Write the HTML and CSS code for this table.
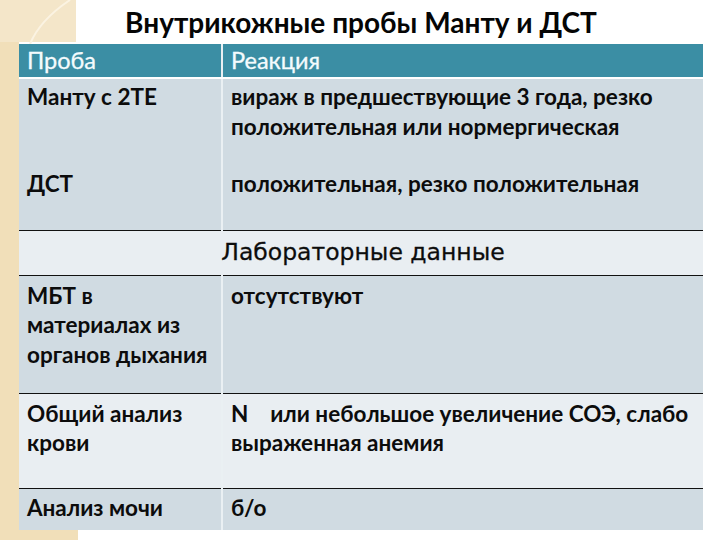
FILE: index.html
```html
<!DOCTYPE html>
<html lang="ru">
<head>
<meta charset="utf-8">
<link rel="stylesheet" href="styles.css">
</head>
<body>
<div class="deco">
  <svg width="720" height="540" viewBox="0 0 720 540">
    <rect x="0" y="0" width="19" height="540" fill="#f1dfb9"/>
    <rect x="0" y="0" width="76" height="42" fill="#f4e6c9"/>
    <path d="M70 0 Q40 20 30 44" stroke="#fbf3e2" stroke-width="2" fill="none"/>
    <rect x="0" y="528" width="78" height="12" fill="#f1dfb9"/>
  </svg>
</div>
<div class="slide">
  <h1 class="title">Внутрикожные пробы Манту и ДСТ</h1>
  <table class="grid">
    <tr class="head">
      <td class="c1">Проба</td>
      <td class="c2">Реакция</td>
    </tr>
    <tr class="r-dark r1">
      <td class="c1">Манту с 2ТЕ</td>
      <td class="c2">вираж в предшествующие 3 года, резко положительная или нормергическая</td>
    </tr>
    <tr class="r-dark r2">
      <td class="c1">ДСТ</td>
      <td class="c2">положительная, резко положительная</td>
    </tr>
    <tr class="r-light lab">
      <td colspan="2" class="labcell">Лабораторные данные</td>
    </tr>
    <tr class="r-dark r3">
      <td class="c1">МБТ в материалах из органов дыхания</td>
      <td class="c2">отсутствуют</td>
    </tr>
    <tr class="r-light r4">
      <td class="c1">Общий анализ крови</td>
      <td class="c2 wide">N&nbsp;&nbsp;&nbsp; или небольшое увеличение СОЭ, слабо выраженная анемия</td>
    </tr>
    <tr class="r-dark r5">
      <td class="c1">Анализ мочи</td>
      <td class="c2">б/о</td>
    </tr>
  </table>
</div>
</body>
</html>
```
FILE: styles.css
```css
html, body {
  margin: 0;
  padding: 0;
  background: #ffffff;
}
body {
  width: 720px;
  height: 540px;
  position: relative;
  overflow: hidden;
  font-family: "Lato", "Open Sans", sans-serif;
  color: #0c0c0c;
}
.deco {
  position: absolute;
  left: 0;
  top: 0;
  width: 720px;
  height: 540px;
  z-index: 0;
}
.deco svg {
  display: block;
}
.slide {
  position: relative;
  z-index: 1;
  padding-left: 19px;
  width: 684px;
}
.title {
  margin: 0;
  height: 44px;
  box-sizing: border-box;
  padding-top: 6px;
  font-size: 28px;
  line-height: 32px;
  font-weight: 700;
  text-align: center;
  color: #050505;
}
.grid {
  border-collapse: collapse;
  width: 684px;
  table-layout: fixed;
  font-size: 22.5px;
  font-weight: 700;
  line-height: 29.5px;
}
.grid td {
  padding: 0 4px 0 8px;
  vertical-align: top;
  box-sizing: border-box;
}
.grid .c1 {
  width: 203px;
  border-right: 2px solid #eaf0f3;
}
.head td {
  background: #3b8ea4;
  color: #f4fbfd;
  height: 33px;
  font-weight: 400;
  font-size: 23.5px;
  line-height: 33px;
  border-bottom: 2px solid #ffffff;
  border-right-color: #ffffff;
  -webkit-text-stroke: 0.3px #f4fbfd;
}
.r-dark td {
  background: #d0dbe2;
}
.r-light td {
  background: #e9eef2;
}
.r1 td {
  height: 88px;
  padding-top: 3px;
}
.r2 td {
  height: 64px;
  padding-top: 3px;
  border-bottom: 1px solid #111;
}
.lab td {
  height: 45px;
  border-bottom: 1px solid #111;
}
.labcell {
  text-align: center;
  font-family: "DejaVu Sans", sans-serif;
  font-weight: 400;
  font-size: 23.5px;
  line-height: 43px;
  -webkit-text-stroke: 0.3px #111;
}
.r3 td {
  height: 118px;
  padding-top: 5px;
  border-bottom: 1px solid #111;
}
.r4 td {
  height: 95px;
  padding-top: 5px;
  border-bottom: 1px solid #111;
}
.r5 td {
  height: 42px;
  padding-top: 4px;
}
```
